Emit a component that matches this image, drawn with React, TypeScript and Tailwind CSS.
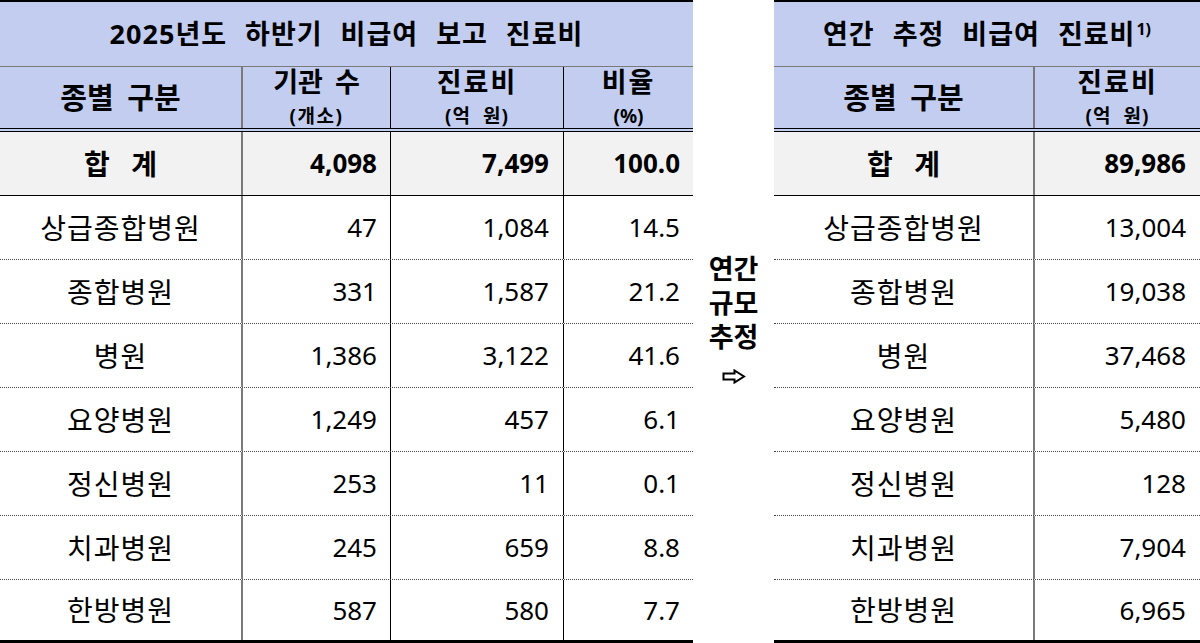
import React from 'react';

const rows = [
  { name: '상급종합병원', count: '47', cost: '1,084', ratio: '14.5', annual: '13,004' },
  { name: '종합병원', count: '331', cost: '1,587', ratio: '21.2', annual: '19,038' },
  { name: '병원', count: '1,386', cost: '3,122', ratio: '41.6', annual: '37,468' },
  { name: '요양병원', count: '1,249', cost: '457', ratio: '6.1', annual: '5,480' },
  { name: '정신병원', count: '253', cost: '11', ratio: '0.1', annual: '128' },
  { name: '치과병원', count: '245', cost: '659', ratio: '8.8', annual: '7,904' },
  { name: '한방병원', count: '587', cost: '580', ratio: '7.7', annual: '6,965' },
];

const font = { fontFamily: '"Noto Sans", "Noto Sans CJK KR", sans-serif' };

function ArrowRight() {
  return (
    <svg width="24" height="15" viewBox="0 0 24 15" className="mt-[15px]">
      <path d="M1.5 4.5 H12.5 V1.5 L22 7.5 L12.5 13.5 V10.5 H1.5 Z" fill="white" stroke="black" strokeWidth="2" strokeLinejoin="miter" />
    </svg>
  );
}

export default function App() {
  return (
    <div className="w-[1200px] h-[643px] bg-white text-black flex overflow-hidden" style={font}>
      {/* left table */}
      <div className="w-[693px] flex flex-col">
        <div className="h-[67px] border-t-2 border-b border-t-black border-b-[#7a7a7a] bg-[#c2cdf0] flex items-center justify-center text-[27px] font-bold tracking-[1px] [word-spacing:10px]">
          2025년도 하반기 비급여 보고 진료비
        </div>
        <div className="h-[65px] bg-[#c2cdf0] border-b-4 border-double border-black flex font-bold">
          <div className="w-[243px] border-r-2 border-[#7a7a7a] flex items-center justify-center text-[29px] [word-spacing:6px]">종별 구분</div>
          <div className="w-[148px] border-r border-black flex flex-col items-center justify-center">
            <span className="text-[27px] leading-[36px] [word-spacing:5px]">기관 수</span>
            <span className="text-[19px] leading-[32px] tracking-[1.5px]">(개소)</span>
          </div>
          <div className="w-[173px] border-r border-black flex flex-col items-center justify-center">
            <span className="text-[27px] leading-[36px] tracking-[2px]">진료비</span>
            <span className="text-[19px] leading-[32px] tracking-[1px] [word-spacing:6px]">(억 원)</span>
          </div>
          <div className="w-[129px] flex flex-col items-center justify-center">
            <span className="text-[27px] leading-[36px] tracking-[2px]">비율</span>
            <span className="text-[19px] leading-[32px]">(%)</span>
          </div>
        </div>
        <div className="h-[64px] bg-[#f2f2f2] border-b border-black flex font-bold text-[26px]">
          <div className="w-[243px] border-r-2 border-[#7a7a7a] flex items-center justify-center text-[28px] [word-spacing:14px]">합 계</div>
          <div className="w-[148px] border-r border-black flex items-center justify-end pr-[13px]">4,098</div>
          <div className="w-[173px] border-r border-black flex items-center justify-end pr-[14px]">7,499</div>
          <div className="w-[129px] flex items-center justify-end pr-[13px]">100.0</div>
        </div>
        {rows.map((r, i) => (
          <div
            key={r.name}
            className={`flex text-[26px] ${i === rows.length - 1 ? 'h-[63px] border-b-[3px] border-solid border-black' : 'h-[64px] border-b border-dotted border-[#444]'}`}
          >
            <div className="w-[243px] border-r-2 border-solid border-[#7a7a7a] flex items-center justify-center text-[28px] tracking-[1px]">{r.name}</div>
            <div className="w-[148px] border-r border-solid border-black flex items-center justify-end pr-[13px]">{r.count}</div>
            <div className="w-[173px] border-r border-solid border-black flex items-center justify-end pr-[14px]">{r.cost}</div>
            <div className="w-[129px] flex items-center justify-end pr-[13px]">{r.ratio}</div>
          </div>
        ))}
      </div>

      {/* middle label */}
      <div className="w-[81px] flex flex-col items-center justify-center pb-[8px] font-bold text-[27px] leading-[34px]">
        <span>연간</span>
        <span>규모</span>
        <span>추정</span>
        <ArrowRight />
      </div>

      {/* right table */}
      <div className="w-[426px] flex flex-col">
        <div className="h-[67px] border-t-2 border-b border-t-black border-b-[#7a7a7a] bg-[#c2cdf0] flex items-center justify-center text-[27px] font-bold tracking-[1px] [word-spacing:10px]">
          <span>
            연간 추정 비급여 진료비<sup className="text-[16px] tracking-normal relative -top-[9px] ml-[1px]">1)</sup>
          </span>
        </div>
        <div className="h-[65px] bg-[#c2cdf0] border-b-4 border-double border-black flex font-bold">
          <div className="w-[261px] border-r-2 border-[#7a7a7a] flex items-center justify-center text-[29px] [word-spacing:6px]">종별 구분</div>
          <div className="w-[165px] flex flex-col items-center justify-center">
            <span className="text-[27px] leading-[36px] tracking-[2px]">진료비</span>
            <span className="text-[19px] leading-[32px] tracking-[1px] [word-spacing:6px]">(억 원)</span>
          </div>
        </div>
        <div className="h-[64px] bg-[#f2f2f2] border-b border-black flex font-bold text-[26px]">
          <div className="w-[261px] border-r-2 border-[#7a7a7a] flex items-center justify-center text-[28px] [word-spacing:14px]">합 계</div>
          <div className="w-[165px] flex items-center justify-end pr-[14px]">89,986</div>
        </div>
        {rows.map((r, i) => (
          <div
            key={r.name}
            className={`flex text-[26px] ${i === rows.length - 1 ? 'h-[63px] border-b-[3px] border-solid border-black' : 'h-[64px] border-b border-dotted border-[#444]'}`}
          >
            <div className="w-[261px] border-r-2 border-solid border-[#7a7a7a] flex items-center justify-center text-[28px] tracking-[1px]">{r.name}</div>
            <div className="w-[165px] flex items-center justify-end pr-[14px]">{r.annual}</div>
          </div>
        ))}
      </div>
    </div>
  );
}
